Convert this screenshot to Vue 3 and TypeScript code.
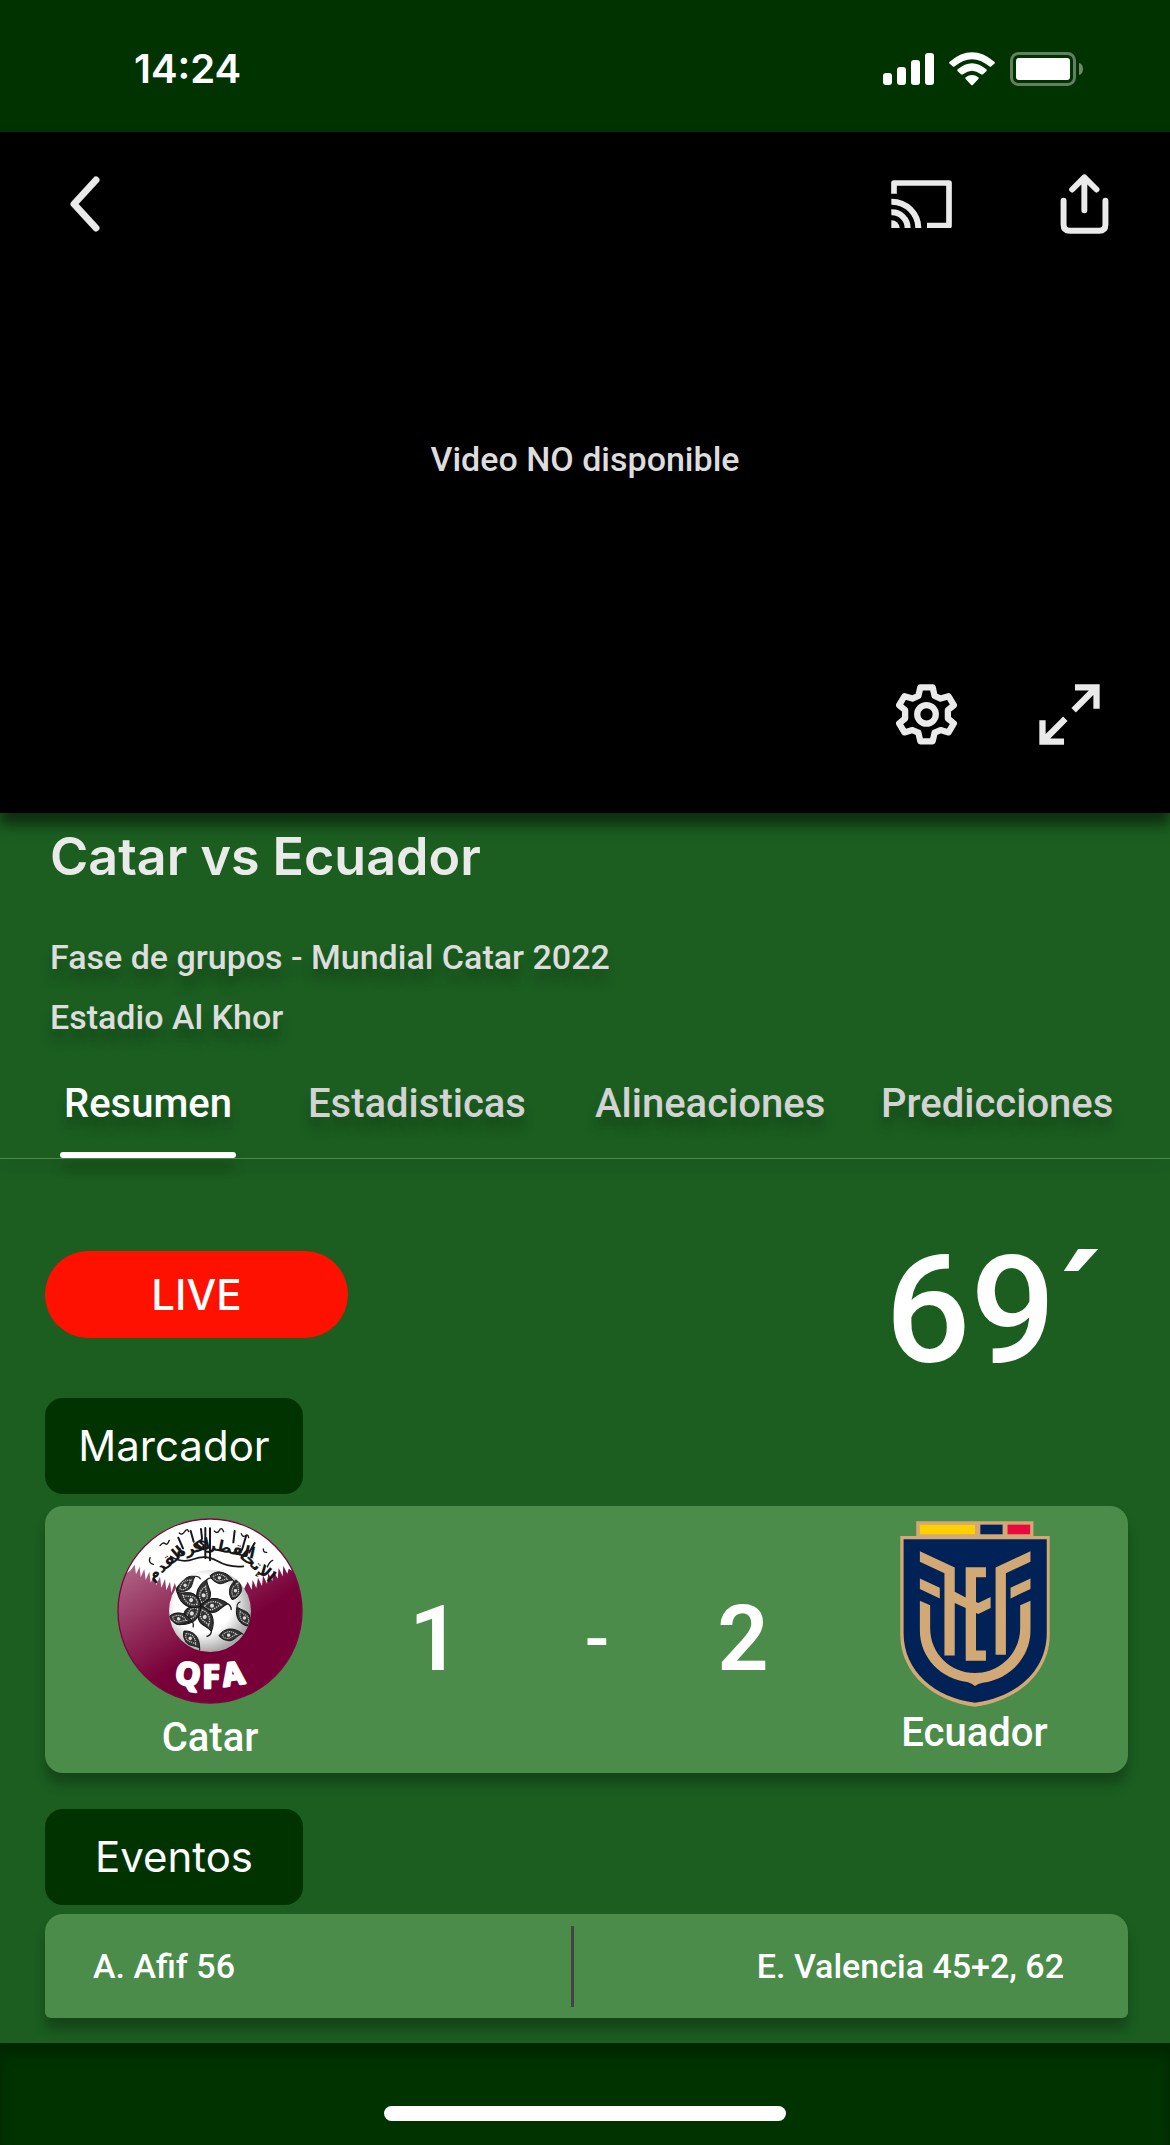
<script setup lang="ts">
import { ref } from 'vue'

interface Tab {
  id: string
  label: string
}

const tabs: Tab[] = [
  { id: 'resumen', label: 'Resumen' },
  { id: 'estadisticas', label: 'Estadisticas' },
  { id: 'alineaciones', label: 'Alineaciones' },
  { id: 'predicciones', label: 'Predicciones' },
]

const activeTab = ref<string>('resumen')

// Paisley leaves on the ball: the central star, then the ones along the rim
const leafAngles: number[] = [10, 82, 154, 226, 298]
const rimLeaves: { x: number; y: number; r: number }[] = [
  { x: 396, y: 298, r: 16 },
  { x: 448, y: 378, r: -35 },
  { x: 357, y: 406, r: 82 },
  { x: 252, y: 392, r: 135 },
  { x: 208, y: 348, r: 100 },
  { x: 232, y: 272, r: 48 },
  { x: 330, y: 226, r: 98 },
]
</script>

<template>
  <main class="screen">
    <header class="status">
      <time class="clock">14:24</time>
      <div class="indicators">
        <svg width="51" height="34" viewBox="0 0 51 34" fill="#fff" aria-hidden="true">
          <rect x="0" y="21" width="9" height="12" rx="3" />
          <rect x="14" y="15" width="9" height="18" rx="3" />
          <rect x="28" y="8" width="9" height="25" rx="3" />
          <rect x="42" y="1" width="9" height="32" rx="3" />
        </svg>
        <svg width="46" height="34" viewBox="270 65 138 102" fill="#fff" aria-hidden="true">
          <path d="M272 94Q339 38 406 94Q409 97 406 100L397 108Q394 111 391 108Q339 65 287 108Q284 111 281 108L272 100Q269 97 272 94Z" />
          <path d="M296 117Q339 81 382 117Q385 120 382 123L372 132Q369 134 366 132Q339 111 312 132Q309 134 306 132L296 123Q293 120 296 117Z" />
          <path d="M320 141Q339 127 358 141Q361 143 358 146L342 163Q339 166 336 163L320 146Q317 143 320 141Z" />
        </svg>
        <svg class="battery" width="74" height="34" viewBox="0 0 74 34" aria-hidden="true">
          <rect x="1.5" y="1.5" width="63" height="31" rx="7" fill="none" stroke="#fff" stroke-opacity=".38" stroke-width="3" />
          <rect x="6" y="6" width="54" height="22" rx="3" fill="#fff" />
          <path d="M69 11q4 1 4 6t-4 6z" fill="#fff" fill-opacity=".42" />
        </svg>
      </div>
    </header>

    <section class="video" aria-label="Video">
      <div class="controls">
        <button class="icon back" type="button" aria-label="Volver">
          <svg width="31" height="56" viewBox="0 0 31 56" fill="none" stroke="#eaeaea" stroke-width="7" stroke-linecap="round" stroke-linejoin="round">
            <path d="M27 4L5 28l22 24" />
          </svg>
        </button>
        <div class="group top-group">
          <button class="icon" type="button" aria-label="Enviar a dispositivo">
            <svg width="61" height="48" viewBox="93 449 183 144" fill="none" stroke="#eaeaea">
              <path d="M102 490V458h165v128H201" stroke-width="17" stroke-linejoin="round" />
              <path d="M94 514a80 80 0 0 1 81 80M94 546a47 47 0 0 1 49 48" stroke-width="18" />
              <path d="M94 570a24 24 0 0 1 25 24H94z" fill="#eaeaea" stroke="none" />
            </svg>
          </button>
          <button class="icon" type="button" aria-label="Compartir">
            <svg width="49" height="60" viewBox="600 431 147 182" fill="none" stroke="#eaeaea" stroke-width="18" stroke-linecap="round" stroke-linejoin="round">
              <path d="M610 512V584q0 19 19 19h89q19 0 19-19V512M673 442V541M636 478L673 441L710 478" />
            </svg>
          </button>
        </div>
      </div>
      <p class="notice">Video NO disponible</p>
      <div class="controls">
        <div class="group bottom-group">
          <button class="icon" type="button" aria-label="Ajustes">
            <svg width="61" height="61" viewBox="106 71 183 184" fill="none" stroke="#eaeaea" stroke-width="19" stroke-linejoin="round">
              <path d="M179 81H216L222 107L240 115L264 108L280 135L262 150V175L280 190L264 217L240 210L222 218L216 244H179L173 218L155 210L131 217L115 190L133 175V150L115 135L131 108L155 115L173 107Z" />
              <circle cx="197.5" cy="162.5" r="28" />
            </svg>
          </button>
          <button class="icon" type="button" aria-label="Pantalla completa">
            <svg width="61" height="61" viewBox="537 71 183 184" fill="none" stroke="#eaeaea" stroke-width="19">
              <path d="M645 81H710V146M710 81L641 150M547 180V245H612M547 245L616 176" />
            </svg>
          </button>
        </div>
      </div>
    </section>

    <section class="match">
      <h1>Catar vs Ecuador</h1>
      <p class="meta">Fase de grupos - Mundial Catar 2022</p>
      <p class="meta">Estadio Al Khor</p>
    </section>

    <nav class="tabs" aria-label="Secciones">
      <a
        v-for="tab in tabs"
        :key="tab.id"
        :href="'#' + tab.id"
        :class="{ active: tab.id === activeTab }"
        @click.prevent="activeTab = tab.id"
      >{{ tab.label }}</a>
    </nav>

    <section class="summary">
      <div class="live-row">
        <span class="live">LIVE</span>
        <span class="minute">69´</span>
      </div>

      <h2 class="badge">Marcador</h2>
      <div class="card score">
        <div class="team">
          <svg width="186" height="186" viewBox="51 53 558 558" role="img" aria-label="QFA">
            <defs>
              <clipPath id="disc"><circle cx="330" cy="332" r="274" /></clipPath>
              <clipPath id="ball"><circle cx="330" cy="332" r="123" /></clipPath>
              <linearGradient id="maroon" x1=".1" y1=".1" x2=".55" y2=".8">
                <stop offset="0" stop-color="#bb7796" />
                <stop offset=".55" stop-color="#8f2856" />
                <stop offset=".85" stop-color="#780038" />
              </linearGradient>
              <radialGradient id="shade" cx=".42" cy=".42" r=".58">
                <stop offset=".6" stop-color="#fff" />
                <stop offset="1" stop-color="#aaa" />
              </radialGradient>
              <g id="leaf">
                <path d="M0 0C-26-22-24-56 4-82C8-60 32-48 20-24C16-12 8-4 0 0Z" fill="#333" stroke="#111" stroke-width="3" />
                <path d="M1-12C-14-28-12-46 4-62C6-46 20-36 12-22C9-16 5-13 1-12Z" fill="none" stroke="#ccc" stroke-width="4" stroke-dasharray="4 3" />
                <circle cx="3" cy="-34" r="6" fill="#ddd" />
                <path d="M4-82q8-10 20-7" fill="none" stroke="#222" stroke-width="4" />
              </g>
            </defs>
            <circle cx="330" cy="332" r="278" fill="#7b0540" />
            <g clip-path="url(#disc)">
              <rect x="51" y="53" width="558" height="558" fill="url(#maroon)" />
              <path
                fill="#fff"
                d="M51 53H609V230L566 205L562 220L550 196L548 228L536 203L533 235L520 210L517 243L505 218L501 250L489 225L486 257L474 232L469 263L458 239L455 268L443 244L420 290H240L224 248L214 277L210 244L199 270L195 236L184 262L180 229L168 255L164 222L152 247L148 214L137 239L133 206L122 231L119 199L108 222L104 193L92 210L51 240Z"
              />
            </g>
            <g class="script" fill="#171717" text-anchor="middle">
              <text x="462" y="204" transform="rotate(40 462 190)">الإتحاد</text>
              <text x="372" y="156" transform="rotate(12 372 142)">القطري</text>
              <text x="279" y="158" transform="rotate(-14 279 144)">لكرة</text>
              <text x="198" y="204" transform="rotate(-40 198 190)">القدم</text>
            </g>
            <g fill="none" stroke="#171717" stroke-width="6" stroke-linecap="round">
              <path d="M235 112l14 32M272 92l9 32M303 86l3 28M316 83v90M330 84v96M404 92l-4 34M438 108l-12 40M464 128l-16 28" />
              <path d="M180 136q10-12 16-6t12-10M238 98q8 8 16-4t12 0M343 92q9 10 15-2t13 4M424 100q4 12 12 6t10 6M490 146q0 12 10 10M150 172q-6 16 10 20M518 180q-10 4-16 20" stroke-width="4" />
              <path d="M212 168q34 22 70 8t70 6 78 16" stroke-width="5" />
            </g>
            <circle cx="330" cy="332" r="123" fill="url(#shade)" />
            <g clip-path="url(#ball)">
              <use v-for="angle in leafAngles" :key="angle" href="#leaf" :transform="`translate(302 318) rotate(${angle})`" />
              <use v-for="(leaf, i) in rimLeaves" :key="i" href="#leaf" :transform="`translate(${leaf.x} ${leaf.y}) rotate(${leaf.r}) scale(.85)`" />
            </g>
            <g class="initials" fill="#fff" stroke="#fff" stroke-width="8" stroke-linejoin="round" text-anchor="middle">
              <text x="264" y="554" transform="rotate(9 264 520)">Q</text>
              <text x="333" y="563">F</text>
              <text x="399" y="554" transform="rotate(-9 399 520)">A</text>
            </g>
          </svg>
          <span>Catar</span>
        </div>
        <strong>1</strong>
        <span class="dash">-</span>
        <strong>2</strong>
        <div class="team away">
          <svg width="150" height="186" viewBox="90 62 450 560" role="img" aria-label="Escudo de Ecuador">
            <path fill="#d2a975" d="M138 63H491V107H540V405C540 520 440 606 315 621C190 606 90 520 90 405V107H138Z" />
            <path fill="#012256" d="M100 117H531V400C531 515 435 595 315 609C195 595 100 515 100 400Z" />
            <path fill="#ffd000" d="M149 73H315V102H149Z" />
            <path fill="#012256" d="M331 73H398V102H331Z" />
            <path fill="#e80b3d" d="M413 73H481V102H413Z" />
            <path
              fill="#d2a975"
              d="M149 153L254 202V275L287 292V201H348V231H318V306L325 309L362 291V324L325 342L318 339V452H348V483H287V324L254 309V467H223V219L149 185ZM482 153V185L408 219V465H377V202ZM149 235L209 263V295L149 267ZM482 235V267L422 295V263ZM149 302L180 316V385C180 460 240 520 315 520C390 520 451 460 451 385V316L482 302V392C482 475 416 540 338 549Q324 552 315 559Q306 552 292 547C214 538 149 475 149 392Z"
            />
          </svg>
          <span>Ecuador</span>
        </div>
      </div>

      <h2 class="badge events-badge">Eventos</h2>
      <div class="card events">
        <p>A. Afif 56</p>
        <p class="right">E. Valencia 45+2, 62</p>
      </div>
    </section>

    <footer class="home-bar"><div class="home-indicator"></div></footer>
  </main>
</template>

<style>
body {
  margin: 0;
  background: #1b5e20;
}
</style>

<style scoped>
.screen {
  display: flex;
  flex-direction: column;
  min-height: 100vh;
  background: #1b5e20;
  color: #fff;
  font-family: Roboto, "Liberation Sans", sans-serif;
  font-weight: 500;
}
h1, h2, p { margin: 0; }
svg { display: block; }

.status {
  display: flex;
  justify-content: space-between;
  align-items: center;
  height: 132px;
  padding: 6px 86px 0 134px;
  box-sizing: border-box;
  background: #003300;
}
.clock {
  font: 600 40px/48px Inter, sans-serif;
}
.indicators {
  display: flex;
  align-items: center;
  gap: 15px;
}

.video {
  display: flex;
  flex-direction: column;
  justify-content: space-between;
  height: 681px;
  padding: 42px 61px 68px;
  box-sizing: border-box;
  background: #000;
  box-shadow: 0 12px 12px rgba(0, 0, 0, .5);
}
.controls {
  display: flex;
  align-items: center;
  justify-content: space-between;
}
.group {
  display: flex;
  align-items: center;
  margin-left: auto;
}
.top-group { gap: 108px; }
.bottom-group {
  gap: 82px;
  padding-right: 9px;
}
.icon {
  padding: 0;
  border: 0;
  background: none;
  cursor: pointer;
}
.back { padding-left: 8px; }
.notice {
  color: #ddd;
  font-size: 34px;
  line-height: 42px;
  text-align: center;
}

.match {
  padding: 12px 50px 2px;
}
h1 {
  margin-bottom: 38px;
  color: #eaeaea;
  font: 600 52px/64px Inter, sans-serif;
}
.meta {
  color: #ddd;
  font-size: 34px;
  line-height: 60px;
  text-shadow: 0 12px 12px rgba(0, 0, 0, .25);
}

.tabs {
  display: grid;
  grid-template-columns: 244fr 287fr 286fr 293fr;
  padding-left: 60px;
  border-bottom: 1px solid #4c8c4a;
  box-shadow: 0 12px 12px rgba(0, 0, 0, .04);
}
.tabs a {
  justify-self: start;
  padding: 25px 4px 24px;
  color: #d3d3d3;
  font-size: 40px;
  line-height: 60px;
  text-decoration: none;
  text-shadow: 0 12px 12px rgba(0, 0, 0, .25);
}
.tabs .active {
  position: relative;
  color: #fff;
}
.tabs .active::after {
  content: "";
  position: absolute;
  right: 0;
  bottom: 0;
  left: 0;
  height: 6px;
  border-radius: 3px;
  background: #fff;
  box-shadow: 0 12px 12px rgba(0, 0, 0, .25);
}

.summary {
  padding: 92px 42px 25px 45px;
}
.live-row {
  display: flex;
  justify-content: space-between;
  height: 147px;
  padding-right: 24px;
}
.live {
  width: 303px;
  height: 87px;
  border-radius: 44px;
  background: #ff1100;
  font: 500 42px/87px Inter, sans-serif;
  text-align: center;
}
.minute {
  font-size: 150px;
  line-height: 120px;
}
.badge {
  width: 258px;
  border-radius: 18px;
  background: #003300;
  font: 400 42px/96px Inter, sans-serif;
  text-align: center;
}
.events-badge { margin-top: 36px; }
.card {
  background: #4c8c4a;
  box-shadow: 0 12px 12px rgba(0, 0, 0, .25);
}
.score {
  display: grid;
  grid-template-columns: 330fr 120fr 204fr 88fr 341fr;
  justify-items: center;
  align-items: center;
  height: 267px;
  margin-top: 12px;
  border-radius: 18px;
}
.score strong {
  font-size: 90px;
  font-weight: 600;
  line-height: 108px;
}
.dash {
  font-size: 72px;
  line-height: 84px;
}
.team {
  display: flex;
  flex-direction: column;
  align-items: center;
  gap: 10px;
  font-size: 40px;
  line-height: 48px;
}
.away {
  gap: 2px;
  padding: 0 0 2px 34px;
}
.events {
  display: grid;
  grid-template-columns: 526fr 557fr;
  align-items: center;
  height: 104px;
  margin-top: 9px;
  border-radius: 18px 18px 6px 6px;
  font-size: 34px;
}
.events p {
  padding: 0 48px;
  line-height: 81px;
}
.events .right {
  padding-right: 64px;
  border-left: 3px solid #444;
  text-align: right;
}

.script {
  font: 700 48px "DejaVu Sans", sans-serif;
}
.initials {
  font: 700 94px "Open Sans", sans-serif;
}

.home-bar {
  flex: 1;
  min-height: 102px;
  padding-top: 63px;
  box-sizing: border-box;
  background: #003300;
  box-shadow: inset 0 12px 12px rgba(0, 0, 0, .25);
}
.home-indicator {
  width: 402px;
  height: 15px;
  margin: 0 auto;
  border-radius: 8px;
  background: #fff;
}
</style>
